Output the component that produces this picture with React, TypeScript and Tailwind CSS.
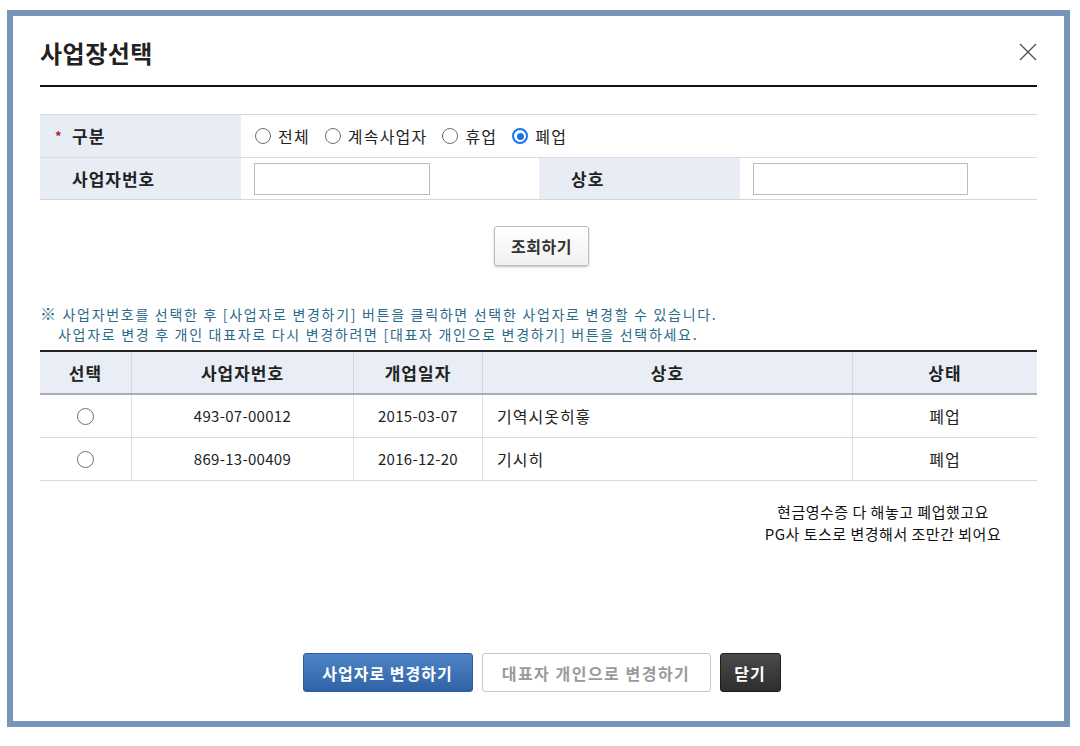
import React from "react";

const FONT = { fontFamily: '"Noto Sans CJK KR", "Noto Sans", sans-serif' };

function Radio({ checked = false, size = 15 }: { checked?: boolean; size?: number }) {
  return (
    <span
      className={
        checked
          ? "flex shrink-0 items-center justify-center rounded-full border-[2px] border-[#1a73e8] bg-white"
          : "flex shrink-0 items-center justify-center rounded-full border border-[#6f6f6f] bg-white"
      }
      style={{ width: size, height: size }}
    >
      {checked ? <span className="h-[7px] w-[7px] rounded-full bg-[#1a73e8]" /> : null}
    </span>
  );
}

const options = [
  { label: "전체", checked: false },
  { label: "계속사업자", checked: false },
  { label: "휴업", checked: false },
  { label: "폐업", checked: true },
];

const rows = [
  { no: "493-07-00012", date: "2015-03-07", name: "기역시옷히흫", status: "폐업" },
  { no: "869-13-00409", date: "2016-12-20", name: "기시히", status: "폐업" },
];

export default function App() {
  return (
    <div className="h-[746px] w-[1080px] bg-white pl-[7px] pt-[10px]" style={FONT}>
      <div className="flex h-[717px] w-[1063px] flex-col border-[6px] border-[#7895b9] px-[27px] pb-[29px] pt-[22px]">
        {/* header */}
        <div className="flex h-[30px] items-start justify-between">
          <h1 className="text-[24px] font-bold leading-[30px] tracking-[0.5px] text-[#222]">사업장선택</h1>
          <svg className="mt-[5px]" width="18" height="18" viewBox="0 0 18 18" fill="none">
            <path d="M1 1L17 17M17 1L1 17" stroke="#555" strokeWidth="1.4" />
          </svg>
        </div>
        <div className="mt-[17px] h-[2px] bg-[#111]" />

        {/* search form */}
        <div className="mt-[27px] border-y border-[#d3d7dd] text-[#222]">
          <div className="flex h-[42px]">
            <div className="flex w-[201px] items-center bg-[#e8edf5] pl-[15px]">
              <span className="w-[17px] text-[13px] font-bold text-[#b3262a]">*</span>
              <span className="text-[17px] font-bold tracking-[1px]">구분</span>
            </div>
            <div className="flex flex-1 items-center gap-[15px] pl-[14px]">
              {options.map((o) => (
                <label key={o.label} className="flex items-center gap-[7px] text-[16px] tracking-[1.2px]">
                  <Radio checked={o.checked} size={16} />
                  {o.label}
                </label>
              ))}
            </div>
          </div>
          <div className="flex h-[42px] border-t border-[#d8dce2]">
            <div className="flex w-[201px] items-center bg-[#e8edf5] pl-[32px] text-[17px] font-bold tracking-[1px]">
              사업자번호
            </div>
            <div className="flex w-[298px] items-center pl-[13px]">
              <input className="h-[32px] w-[176px] border border-[#bcbcbc] bg-white outline-none" />
            </div>
            <div className="flex w-[201px] items-center bg-[#e8edf5] pl-[32px] text-[17px] font-bold tracking-[1px]">
              상호
            </div>
            <div className="flex flex-1 items-center pl-[13px]">
              <input className="h-[32px] w-[215px] border border-[#bcbcbc] bg-white outline-none" />
            </div>
          </div>
        </div>

        <div className="mt-[26px] flex justify-center pl-[6px]">
          <button className="h-[40px] w-[95px] rounded-[3px] border border-[#bdbdbd] bg-gradient-to-b from-white to-[#f1f1f1] text-[16px] font-bold tracking-[0.5px] text-[#333] shadow-[0_1px_2px_rgba(0,0,0,0.25)]">
            조회하기
          </button>
        </div>

        {/* notice */}
        <div className="mt-[37px] text-[14px] leading-[20px] tracking-[1.7px] text-[#2a6a8a]">
          <p>
            <span className="text-[16px]">※</span> 사업자번호를 선택한 후 [사업자로 변경하기] 버튼을 클릭하면 선택한 사업자로 변경할 수 있습니다.
          </p>
          <p className="pl-[18px]">사업자로 변경 후 개인 대표자로 다시 변경하려면 [대표자 개인으로 변경하기] 버튼을 선택하세요.</p>
        </div>

        {/* result table */}
        <div className="mt-[6px] border-t-2 border-[#222] text-[#222]">
          <div className="grid h-[43px] grid-cols-[91px_222px_129px_370px_185px] border-b-2 border-[#a9aeb6] bg-[#e9edf5] text-[17px] font-bold tracking-[1px]">
            <div className="flex items-center justify-center">선택</div>
            <div className="flex items-center justify-center border-l border-[#d3d8e0]">사업자번호</div>
            <div className="flex items-center justify-center border-l border-[#d3d8e0]">개업일자</div>
            <div className="flex items-center justify-center border-l border-[#d3d8e0]">상호</div>
            <div className="flex items-center justify-center border-l border-[#d3d8e0]">상태</div>
          </div>
          {rows.map((r) => (
            <div
              key={r.no}
              className="grid h-[43px] grid-cols-[91px_222px_129px_370px_185px] border-b border-[#d9d9d9] text-[15px]"
            >
              <div className="flex items-center justify-center">
                <Radio size={17} />
              </div>
              <div className="flex items-center justify-center border-l border-[#e0e0e0] tracking-[0.3px]">{r.no}</div>
              <div className="flex items-center justify-center border-l border-[#e0e0e0] tracking-[0.3px]">{r.date}</div>
              <div className="flex items-center border-l border-[#e0e0e0] pl-[14px] text-[16px] tracking-[1px]">{r.name}</div>
              <div className="flex items-center justify-center border-l border-[#e0e0e0] text-[16px] tracking-[1px]">{r.status}</div>
            </div>
          ))}
        </div>

        <div className="ml-[718px] mt-[20px] w-[250px] text-center text-[15px] leading-[22px] tracking-[0.5px] text-[#111]">
          <p>현금영수증 다 해놓고 폐업했고요</p>
          <p>PG사 토스로 변경해서 조만간 뵈어요</p>
        </div>

        {/* footer buttons */}
        <div className="mt-auto flex justify-center gap-[9px] pl-[6px]">
          <button className="h-[39px] w-[170px] rounded-[3px] border border-[#2b5c9c] bg-gradient-to-b from-[#4f84c6] to-[#2f63a6] text-[16px] font-bold tracking-[1px] text-white">
            사업자로 변경하기
          </button>
          <button className="h-[39px] w-[229px] rounded-[3px] border border-[#c6c6c6] bg-white text-[16px] font-bold tracking-[1.5px] text-[#9a9a9a]">
            대표자 개인으로 변경하기
          </button>
          <button className="h-[39px] w-[61px] rounded-[3px] border border-[#1e1e1e] bg-gradient-to-b from-[#4a4a4a] to-[#2e2e2e] text-[16px] font-bold tracking-[1px] text-white">
            닫기
          </button>
        </div>
      </div>
    </div>
  );
}
